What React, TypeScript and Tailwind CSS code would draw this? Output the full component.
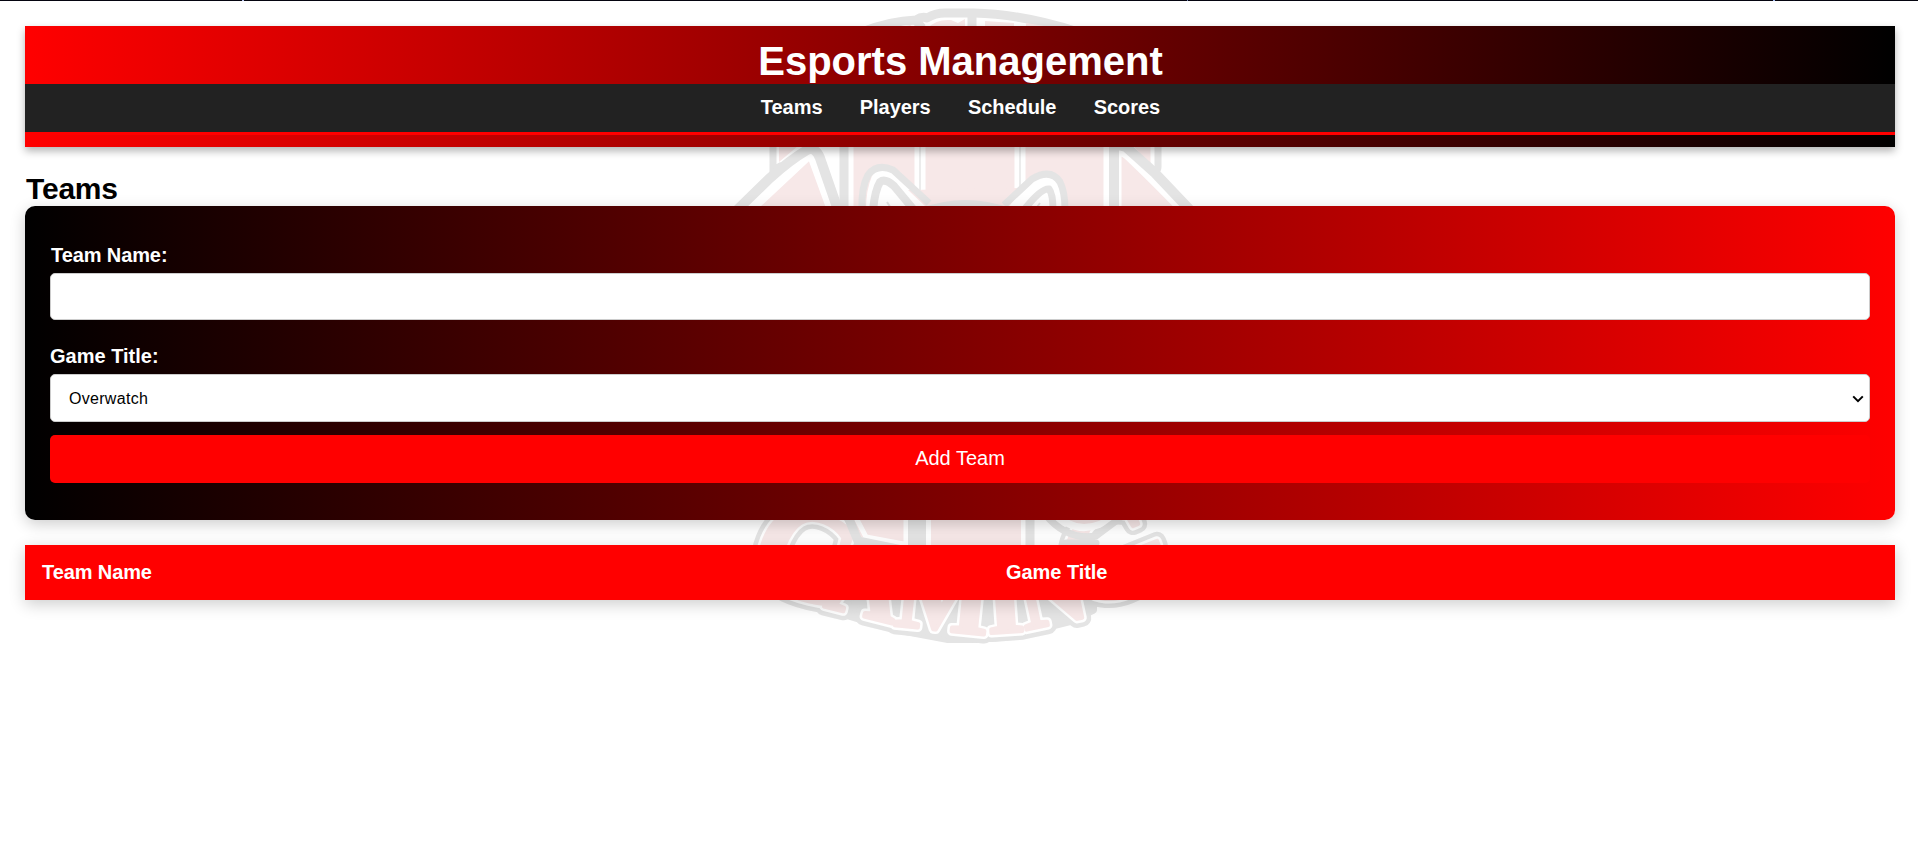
import type { ReactNode } from "react";

const navItems = ["Teams", "Players", "Schedule", "Scores"];

const letters = [
  { char: "G", x: 790, y: 594, rotate: 22, size: 130 },
  { char: "A", x: 858, y: 615, rotate: 14, size: 100 },
  { char: "M", x: 940, y: 630, rotate: 6, size: 100 },
  { char: "I", x: 1007, y: 632, rotate: -4, size: 96 },
  { char: "N", x: 1058, y: 623, rotate: -12, size: 94 },
  { char: "G", x: 1128, y: 594, rotate: -22, size: 130 },
];

function Lettering({ className, strokeWidth }: { className: string; strokeWidth: number }) {
  return (
    <g className={className} strokeWidth={strokeWidth} strokeLinejoin="round" textAnchor="middle">
      {letters.map((l) => (
        <text key={l.x} fontSize={l.size} transform={`translate(${l.x} ${l.y}) rotate(${l.rotate})`}>
          {l.char}
        </text>
      ))}
    </g>
  );
}

function Emblem() {
  return (
    <svg
      aria-hidden="true"
      className="pointer-events-none absolute top-0 left-[719px] -z-10 h-[660px] w-[480px] font-['Liberation_Serif',serif] font-bold"
      viewBox="719 0 480 660"
      fill="none"
    >
      {/* crest top */}
      <path d="M862 32Q890 21 916 20Q922 16 927 18Q935 13 945 13H974Q1022 14 1078 32" stroke="#e4e4e4" strokeWidth="9" strokeLinecap="round" strokeLinejoin="round" />
      <path d="M972 11V30M915 19L922 28" stroke="#e4e4e4" strokeWidth="9" />
      <path d="M898 28L910 25L914 28ZM928 28Q936 19 951 20L958 23L965 19V28ZM985 21L1014 23V28H985Z" fill="#f7e8e8" />
      <path d="M1026 25L1044 28" stroke="#f7e8e8" strokeWidth="4" />

      {/* upper body */}
      <path d="M853 140H1105V210H853Z" fill="#f7e8e8" />
      <path d="M851 140V210M1106 140V210M1121 140V210" stroke="#fff" strokeWidth="5" />
      <path d="M920 140V210M1020 140V210" stroke="#fff" strokeWidth="11" />
      <path d="M920 140V210M1020 140V210" stroke="#ececec" strokeWidth="2" />
      <path d="M844 140V210M1114 140V210" stroke="#e4e4e4" strokeWidth="9" />

      {/* side wings */}
      <path d="M779 140H805L779 162ZM1128 140H1153V168Z" fill="#f7e8e8" />
      <path d="M777 140V165M1152 140V166" stroke="#fff" strokeWidth="3" />
      <path d="M773 140V170L782 165M1158 140V167Q1158 172 1153 169" stroke="#e4e4e4" strokeWidth="7" />
      <path d="M751 212L810 157L830 212Z" fill="#f7e8e8" stroke="#fff" strokeWidth="5" />
      <path d="M737 210L770 178Q790 160 807 150Q815 146 820 158L838 210" stroke="#e4e4e4" strokeWidth="10" />
      <path d="M1121 212V155L1180 212Z" fill="#f7e8e8" />
      <path d="M1119 212V153Q1124 154 1132 161L1180 210" stroke="#fff" strokeWidth="5" />
      <path d="M1114 210V144L1126 147L1155 173L1190 210" stroke="#e4e4e4" strokeWidth="10" />

      {/* ears and head */}
      <path d="M866 210Q866 190 872 176Q880 162 900 177L925 205L934 212H1004L1030 182Q1050 166 1059 184Q1063 196 1064 210Z" fill="#fff" />
      <path d="M908 190L925 206H1006L1024 188Z" fill="#f7e8e8" />
      <path d="M862 210Q861 188 868 175Q877 163 893 170L929 203" stroke="#e4e4e4" strokeWidth="7" />
      <path d="M873 210Q875 190 880 182Q885 178 894 186L914 210" stroke="#e4e4e4" strokeWidth="8" />
      <path d="M1065 210Q1065 192 1060 182Q1051 168 1032 179L1004 205" stroke="#e4e4e4" strokeWidth="7" />
      <path d="M1053 210Q1053 194 1049 189Q1041 188 1024 210" stroke="#e4e4e4" strokeWidth="7" />
      <path d="M922 208Q965 192 1010 208Z" fill="#e4e4e4" />
      <path d="M887 202L892 210M1040 203L1035 210" stroke="#e4e4e4" strokeWidth="2" />

      {/* bottom lettering */}
      <path d="M824 590V608L860 619L900 630L932 636L948 639H978L1022 635L1054 625L1070 621L1093 610V590Z" fill="#e4e4e4" stroke="#e4e4e4" strokeWidth="8" strokeLinejoin="round" />
      <Lettering className="fill-[#e4e4e4] stroke-[#e4e4e4]" strokeWidth={18} />
      <Lettering className="fill-white stroke-white" strokeWidth={9} />
      <Lettering className="fill-[#f7e8e8] stroke-[#f7e8e8]" strokeWidth={4} />

      {/* lower body */}
      <path d="M848 512L861 537L905 545V512Z" fill="#f7e8e8" />
      <path d="M853 512L866 537L909 545M906 512V548M929 512V548M1023 512V548" stroke="#fff" strokeWidth="5" />
      <path d="M931 512H1021V550H931Z" fill="#f7e8e8" />
      <path d="M846 512L858 541L902 550M1030 512V550" stroke="#e4e4e4" strokeWidth="9" />
      <path d="M917 512V550" stroke="#e4e4e4" strokeWidth="18" />
      <path d="M1058 512Q1082 537 1118 512Z" fill="#f7e8e8" />
      <path d="M1054 512Q1079 541 1115 516" stroke="#fff" strokeWidth="7" />
      <path d="M1045 514Q1067 541 1096 536L1120 518" stroke="#e4e4e4" strokeWidth="7" />
      <path d="M1066 543H1096" stroke="#e4e4e4" strokeWidth="7" strokeLinecap="round" />
    </svg>
  );
}

function Label({ htmlFor, children }: { htmlFor: string; children: ReactNode }) {
  return (
    <label htmlFor={htmlFor} className="mb-1.5 block text-[20px] leading-[23px] font-bold text-white">
      {children}
    </label>
  );
}

export default function App() {
  return (
    <div className="relative isolate min-h-screen bg-white font-['Liberation_Sans',Arial,sans-serif] text-black">
      <Emblem />
      <div className="h-px bg-[linear-gradient(90deg,#050510_242px,#b8c4f0_242px_244px,#050510_244px_1187px,#7888bb_1187px_1188px,#050510_1188px_1773px,#a0b8ee_1773px_1775px,#050510_1775px)]" />

      <div className="pt-[25px] pr-[23px] pl-[25px]">
        <header className="h-[121px] bg-linear-to-r from-[#ff0000] to-black text-center text-white shadow-[0_4px_8px_rgba(0,0,0,0.3)] [--tw-gradient-position:to_right]">
          <h1 className="h-[58px] pt-3 pl-px text-[40px] leading-[46px] font-bold">Esports Management</h1>
          <nav className="h-[51px] border-b-3 border-[#ff0000] bg-[#222222] pt-3">
            <ul className="flex justify-center gap-[37.3px] pl-px text-[20px] leading-[23px] font-bold tracking-[-0.05px]">
              {navItems.map((item) => (
                <li key={item}>
                  <a href="#">{item}</a>
                </li>
              ))}
            </ul>
          </nav>
        </header>

        <main className="pt-[25px]">
          <h2 className="pl-px text-[30px] leading-[34px] font-bold tracking-[-0.2px]">Teams</h2>
          <form className="h-[314px] rounded-[10px] bg-linear-to-r from-black to-[#ff0000] px-[25px] pt-[38px] shadow-[0_4px_15px_rgba(0,0,0,0.2)] [--tw-gradient-position:to_right]">
            <Label htmlFor="team"><span className="pl-px tracking-[-0.1px]">Team Name:</span></Label>
            <input id="team" className="mb-[25px] block h-[47px] w-full rounded-[5px] border border-[#cccccc] bg-white px-[15px] text-[16px] text-black" />
            <Label htmlFor="game">Game Title:</Label>
            <div className="relative mb-[13px]">
              <select id="game" className="block h-12 w-full appearance-none rounded-[5px] border border-[#cccccc] bg-white px-[18px] pt-0.5 text-[16px] tracking-[0.3px] text-black">
                <option>Overwatch</option>
              </select>
              <svg aria-hidden="true" className="pointer-events-none absolute top-[21px] right-[6px] h-[8px] w-[12px]" viewBox="0 0 12 8" fill="none">
                <path d="M1.2 1.4L6 6.2L10.8 1.4" stroke="#000" strokeWidth="2" />
              </svg>
            </div>
            <button type="button" className="block h-12 w-full rounded-[5px] bg-[#ff0000] pb-0.5 text-[20px] leading-[23px] text-white">
              Add Team
            </button>
          </form>

          <table className="mt-[25px] w-full table-fixed border-collapse bg-[#ff0000] text-left text-[20px] leading-[23px] text-white shadow-[0_4px_15px_rgba(0,0,0,0.2)]">
            <thead>
              <tr className="h-[55px]">
                <th className="w-[964px] px-[17px] py-0 font-bold tracking-[-0.1px]">Team Name</th>
                <th className="px-[17px] py-0 font-bold tracking-[-0.05px]">Game Title</th>
              </tr>
            </thead>
          </table>
        </main>
      </div>
    </div>
  );
}
